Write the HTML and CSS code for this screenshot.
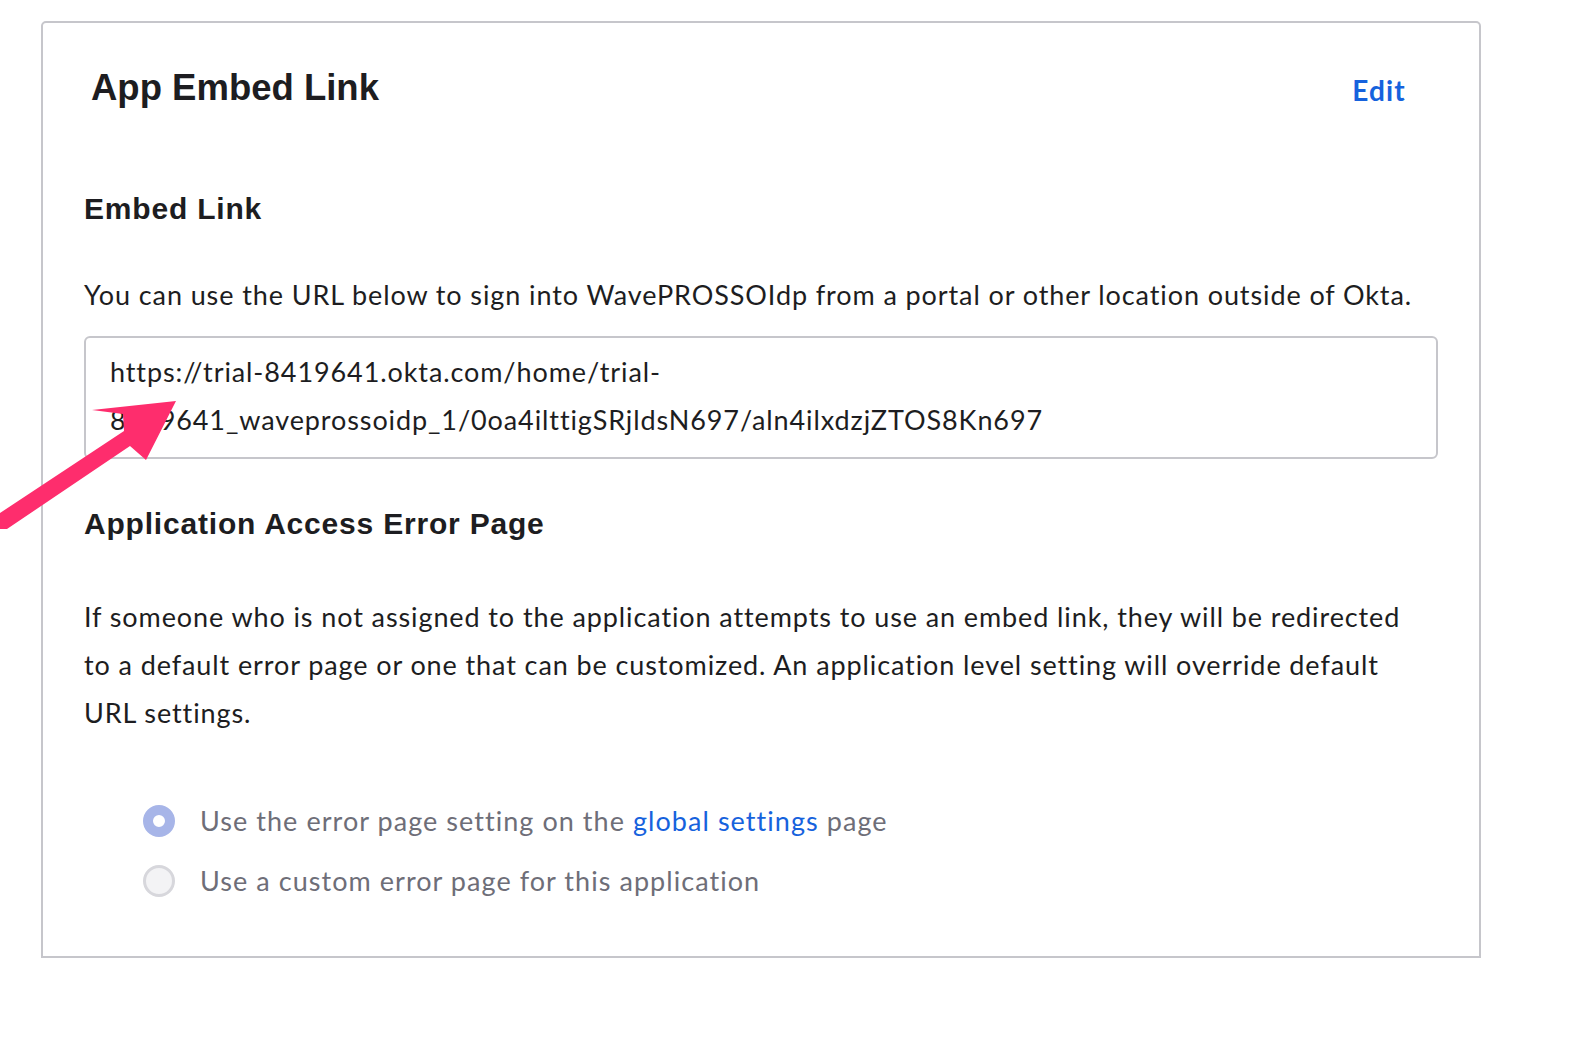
FILE: index.html
```html
<!DOCTYPE html>
<html lang="en">
<head>
    <meta charset="UTF-8">
    <title>App Embed Link</title>
    <link rel="stylesheet" href="styles.css">
</head>
<body>
    <section class="card">
        <header class="card-header">
            <h2>App Embed Link</h2>
            <a class="edit-link" href="#">Edit</a>
        </header>

        <h3>Embed Link</h3>
        <p class="lead">You can use the URL below to sign into WavePROSSOIdp from a portal or other location outside of Okta.</p>
        <div class="url-box">https://trial-8419641.okta.com/home/trial-8419641_waveprossoidp_1/0oa4ilttigSRjldsN697/aln4ilxdzjZTOS8Kn697</div>

        <h3 class="error-title">Application Access Error Page</h3>
        <p class="desc">If someone who is not assigned to the application attempts to use an embed link, they will be redirected to a default error page or one that can be customized. An application level setting will override default URL settings.</p>

        <ul class="radio-list">
            <li class="radio-row">
                <span class="radio checked"></span>
                <span class="radio-label">Use the error page setting on the <a href="#">global settings</a> page</span>
            </li>
            <li class="radio-row">
                <span class="radio"></span>
                <span class="radio-label">Use a custom error page for this application</span>
            </li>
        </ul>
    </section>

    <!-- annotation arrow drawn over the screenshot -->
    <svg class="arrow" width="200" height="140" viewBox="0 400 200 140">
        <polygon points="0,513 124,431 123,414 92,410 176,401 146,460 130,446 7,529 0,529" fill="#fe2d6d"/>
    </svg>
</body>
</html>
```

FILE: styles.css
```css
/* Page */
body {
    margin: 0;
    background-color: #ffffff;
    font-family: Lato, "Open Sans", sans-serif;
    color: #1d1d21;
}

/* Card */
.card {
    box-sizing: border-box;
    width: 1440px;
    height: 937px;
    margin: 21px 0 0 41px;
    padding: 43px 41px 0 41px;
    border: 2px solid #c6c6cb;
    border-radius: 5px 5px 0 0;
}

.card-header {
    display: flex;
    justify-content: space-between;
    align-items: baseline;
    margin: 0 32px 0 7px;
}

.card-header h2 {
    margin: 0;
    font-family: "Liberation Sans", Arial, sans-serif;
    font-size: 36.5px;
    line-height: 44px;
    font-weight: bold;
}

.edit-link {
    position: relative;
    top: 1px;
    color: #1662dd;
    font-size: 28px;
    letter-spacing: 1.2px;
    font-weight: bold;
    text-decoration: none;
}

/* Sections */
h3 {
    margin: 81px 0 0 0;
    font-family: "Liberation Sans", Arial, sans-serif;
    font-size: 30px;
    line-height: 36px;
    letter-spacing: 0.8px;
    font-weight: bold;
}

.error-title {
    margin-top: 47px;
}

.lead, .desc, .url-box, .radio-label {
    font-size: 27px;
    line-height: 48px;
    letter-spacing: 0.9px;
}

.lead {
    margin: 44px 0 17px 0;
}

.url-box {
    padding: 10px 24px 13px 24px;
    border: 2px solid #c6c6cb;
    border-radius: 6px;
}

.desc {
    max-width: 1335px;
    margin: 51px 0 0 0;
}

/* Radio options */
.radio-list {
    list-style: none;
    margin: 54px 0 0 0;
    padding: 0 0 0 59px;
}

.radio-row {
    display: flex;
    align-items: center;
    gap: 25px;
    height: 60px;
}

.radio {
    box-sizing: border-box;
    width: 32px;
    height: 32px;
    border-radius: 50%;
    border: 3px solid #d7d7dc;
    background-color: #f3f3f5;
}

.radio.checked {
    border: 10px solid #a7b5e8;
    background-color: #ffffff;
}

.radio-label {
    color: #6e6e78;
    letter-spacing: 1.05px;
}

.radio-label a {
    color: #1662dd;
    text-decoration: none;
}

/* Annotation */
.arrow {
    position: absolute;
    left: 0;
    top: 400px;
}
```
